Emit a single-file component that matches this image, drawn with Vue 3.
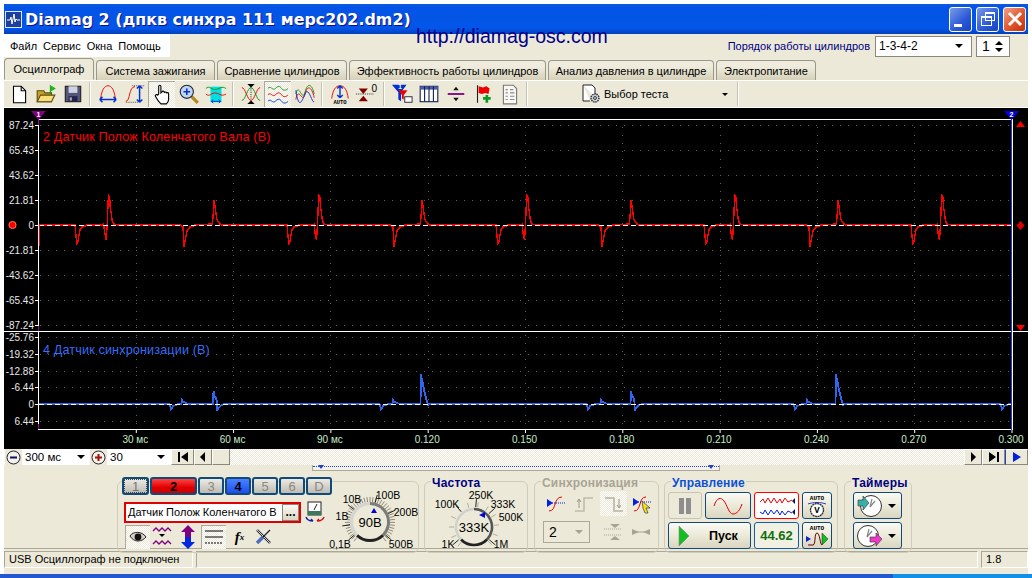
<script setup>
// Diamag 2 oscilloscope window

const tabs = [
  { name: 'Осциллограф', w: 90 },
  { name: 'Система зажигания', w: 119 },
  { name: 'Сравнение цилиндров', w: 130 },
  { name: 'Эффективность работы цилиндров', w: 197 },
  { name: 'Анализ давления в цилиндре', w: 166 },
  { name: 'Электропитание', w: 100 }
];

const channels = [
  { t: '1', w: 27, c: 'gray focus' },
  { t: '2', w: 47, c: 'red' },
  { t: '3', w: 26, c: 'gray dim' },
  { t: '4', w: 26, c: 'blue' },
  { t: '5', w: 26, c: 'gray dim' },
  { t: '6', w: 26, c: 'gray dim' },
  { t: 'D', w: 26, c: 'gray dim' }
];

// --- plot data ---
const gridX = Array.from({ length: 9 }, (_, i) => 39 + 97.3 * (i + 1));
const timeLabels = ['30 мс', '60 мс', '90 мс', '0.120', '0.150', '0.180', '0.210', '0.240', '0.270', '0.300'];
const upperAxis = [
  ['87.24', 125], ['65.43', 150], ['43.62', 175], ['21.81', 200], ['0', 225],
  ['-21.81', 250], ['-43.62', 275], ['-65.43', 300], ['-87.24', 325]
];
const lowerAxis = [
  ['-25.76', 337], ['-19.32', 354], ['-12.88', 371], ['-6.44', 387], ['0', 404], ['6.44', 421]
];

const place = (x0, pts) => pts.map(([dx, y]) => [x0 + dx, y]);
const toPath = (base, pulses) => {
  const all = pulses.slice().sort((a, b) => a[0][0] - b[0][0]).flat();
  return 'M39 ' + base + ' ' + all.map(p => 'L' + p[0] + ' ' + p[1]).join(' ') + ' L1012 ' + base;
};

const negA = [[-2, 225], [-1, 236], [0, 243], [1, 241], [2, 235], [3, 230], [5, 227], [8, 226], [10, 225]];
const negB = [[-4, 225], [-1, 227], [0, 247], [1.5, 238], [3, 231], [6, 227], [9, 226], [11, 225]];
const tall = [[-6, 225], [-5, 224], [-4, 233], [-2.5, 240], [-1.5, 224], [-0.5, 200], [0, 196], [1, 198], [1.5, 207], [2.5, 213], [3.5, 221], [5, 224], [9, 225]];
const small = [[-2, 224], [-1, 218], [0, 200], [1.5, 210], [3, 220], [6, 224], [8, 225]];

const redPulses = [];
[77, 184, 289, 394, 498, 602, 706, 810, 913].forEach((x, i) => redPulses.push(place(x, i % 2 ? negB : negA)));
[108.7, 214, 319, 422, 527, 631, 735, 838, 942].forEach((x, i) => redPulses.push(place(x, i % 2 ? small : tall)));
const redPath = toPath(225, redPulses);

const bNeg = [[-1.5, 404], [0, 409], [1, 408], [2, 406], [5, 405], [7, 404]];
const bBump = [[-0.5, 404], [0, 400], [1.5, 402], [4, 403], [7, 404]];
const bSmall = [[-0.5, 404], [0, 391], [1, 396], [2.5, 398], [3.5, 402], [3.5, 411], [5, 408], [8, 405], [11, 404]];
const bTall = [[-0.5, 404], [0, 374], [1, 380], [2, 384], [3, 390], [4, 394], [5, 398], [6, 402], [7, 405], [7.5, 404]];

const bluePulses = [];
[171, 381, 588, 795, 1002].forEach(x => bluePulses.push(place(x, bNeg)));
[182, 393, 601, 807].forEach(x => bluePulses.push(place(x, bBump)));
[213.5, 421, 631, 836].forEach((x, i) => bluePulses.push(place(x, i % 2 ? bTall : bSmall)));
const bluePath = toPath(404, bluePulses);

// --- knobs ---
const rad = d => (d * Math.PI) / 180;
const ticks = (cx, cy, r1, r2, from, to, step) => {
  const out = [];
  for (let a = from; a <= to; a += step) {
    out.push({
      x1: cx + r1 * Math.cos(rad(a)), y1: cy + r1 * Math.sin(rad(a)),
      x2: cx + r2 * Math.cos(rad(a)), y2: cy + r2 * Math.sin(rad(a))
    });
  }
  return out;
};
const at = (cx, cy, r1, r2, list) => list.flatMap(a => ticks(cx, cy, r1, r2, a, a, 1));

const volt = { hatch: ticks(370, 522, 20, 25, 130, 410, 7), black: at(370, 522, 20, 28, [140, 172, 218, 285, 335, 40]) };
const freq = { hatch: ticks(474, 527, 20, 25, 130, 410, 25), black: at(474, 527, 20, 28, [140, 230, 275, 318, 40]) };
</script>

<template>
  <div class="win">
    <header class="titlebar">
      <svg class="app-ico" viewBox="0 0 17 17" width="17" height="17">
        <rect x="0.5" y="0.5" width="16" height="16" fill="#1c3f9e" stroke="#dfe8ff" />
        <path d="M2 9h3l1-3 1 7 2-10 1 8 1-3 1 1h3" fill="none" stroke="#fff" />
      </svg>
      <span class="app-title">Diamag 2 (дпкв синхра 111 мерс202.dm2)</span>
      <div class="caps">
        <button class="cap"><i class="c-min"></i></button>
        <button class="cap"><i class="c-res"></i><i class="c-res back"></i></button>
        <button class="cap close">
          <svg viewBox="0 0 16 16" width="16" height="16"><path d="M2 2l12 12M14 2L2 14" stroke="#fff" stroke-width="3" /></svg>
        </button>
      </div>
    </header>
    <a class="site">http://diamag-osc.com</a>

    <div class="menurow">
      <nav class="menu">
        <span>Файл</span><span>Сервис</span><span>Окна</span><span>Помощь</span>
      </nav>
      <div class="order">
        <span class="order-label">Порядок работы цилиндров</span>
        <div class="combo order-combo"><span>1-3-4-2</span><i class="arr"></i></div>
        <div class="spin"><span>1</span>
          <div class="spin-arrows"><i class="arr up"></i><i class="arr"></i></div>
        </div>
      </div>
    </div>

    <div class="tabs">
      <div v-for="(t, i) in tabs" :key="t.name" class="tab" :class="{ active: i === 0 }" :style="{ width: t.w + 'px' }">{{ t.name }}</div>
    </div>

    <div class="toolbar">
      <button class="tb">
        <svg viewBox="0 0 20 20"><path d="M5 3h7l4 4v11H5z" fill="#fff" stroke="#000" /><path d="M12 3v4h4" fill="none" stroke="#000" /></svg>
      </button>
      <button class="tb">
        <svg viewBox="0 0 20 20"><path d="M2 7h6l1 2h6v8H2z" fill="#c9a227" stroke="#5a4a10" /><path d="M2 17l3-6h13l-3 6z" fill="#f6de7a" stroke="#5a4a10" /><path d="M14 2v8" stroke="#0a0" /><path d="M14 2l5 3-5 3z" fill="#1fb51f" /></svg>
      </button>
      <button class="tb">
        <svg viewBox="0 0 20 20"><rect x="3" y="3" width="14" height="14" fill="#55557a" stroke="#222" /><rect x="6" y="3" width="8" height="6" fill="#cfd2e0" /><rect x="6" y="12" width="8" height="5" fill="#22224a" /><rect x="7" y="13" width="2" height="3" fill="#aaa" /></svg>
      </button>
      <i class="tsep first"></i>
      <button class="tb">
        <svg viewBox="0 0 24 24"><path d="M4 17C5 8 8 3 12 3s7 5 8 14" fill="none" stroke="#e00" /><path d="M3 18h18M3 18l3-3M3 18l3 3M21 18l-3-3M21 18l-3 3" fill="none" stroke="#0030d0" stroke-width="1.6" /></svg>
      </button>
      <button class="tb">
        <svg viewBox="0 0 24 24"><path d="M2 20c5 0 3-16 10-16" fill="none" stroke="#e00" /><path d="M9 3h13M2 21h13" stroke="#444" stroke-dasharray="1 1" /><path d="M17 3v18M17 3l-3 3M17 3l3 3M17 21l-3-3M17 21l3-3" fill="none" stroke="#0030d0" stroke-width="1.6" /></svg>
      </button>
      <button class="tb on">
        <svg viewBox="0 0 20 20"><path d="M7 10V3a1 1 0 0 1 2 0v6l1-1a1 1 0 0 1 2 1 1 1 0 0 1 2 0.5 1 1 0 0 1 2 .5v5c0 2-1 3-2 4H9c-2-2-4-5-5-7-.5-1 1-2 2-1z" fill="#fff" stroke="#000" /></svg>
      </button>
      <button class="tb">
        <svg viewBox="0 0 20 20"><path d="M12 12l6 6" stroke="#b08a20" stroke-width="3" /><circle cx="8" cy="8" r="6" fill="#bcd6f5" stroke="#223" /><path d="M5 8h6M8 5v6" stroke="#1030c0" stroke-width="1.4" /></svg>
      </button>
      <button class="tb">
        <svg viewBox="0 0 24 24"><rect x="6" y="4" width="12" height="17" fill="#00e0e0" /><path d="M1 6c4-4 6 2 11 1s6-4 11-1" fill="none" stroke="#109010" /><path d="M1 12c4 4 6-2 11-1s6 4 11 1" fill="none" stroke="#e00" /><path d="M7 20h10M7 20l2-2M7 20l2 2M17 20l-2-2M17 20l-2 2" fill="none" stroke="#0030d0" /></svg>
      </button>
      <i class="tsep"></i>
      <button class="tb">
        <svg viewBox="0 0 24 24"><path d="M2 5c4 0 6 14 10 14s6-14 10-14" fill="none" stroke="#e00" /><path d="M2 19c4 0 6-14 10-14s6 14 10 14" fill="none" stroke="#109010" /><path d="M8 1h8l-4 4zM8 23h8l-4-4z" /><path d="M12 6v12" stroke="#222" stroke-dasharray="1 1" /></svg>
      </button>
      <button class="tb on">
        <svg viewBox="0 0 24 24"><path d="M1 6c3-4 5 3 8 0s5-3 7 0 5 2 7 0" fill="none" stroke="#109010" /><path d="M1 13c3-4 5 3 8 0s5-3 7 0 5 2 7 0" fill="none" stroke="#e00" /><path d="M1 20c3-4 5 3 8 0s5-3 7 0 5 2 7 0" fill="none" stroke="#0030d0" /></svg>
      </button>
      <button class="tb">
        <svg viewBox="0 0 24 24"><path d="M2 12C5-2 9 22 12 10s8-8 10 2" fill="none" stroke="#109010" /><path d="M2 18C5 2 9 24 12 12s8-6 10 4" fill="none" stroke="#e00" /><path d="M2 8c3 20 6 14 10 4s8 12 10 8" fill="none" stroke="#0030d0" /></svg>
      </button>
      <i class="tsep"></i>
      <button class="tb">
        <svg viewBox="0 0 24 24"><path d="M3 17C4 8 7 3 12 3s8 5 9 14" fill="none" stroke="#e00" /><path d="M12 3v13M12 3L9 6M12 3l3 3M12 16l-3-3M12 16l3-3" fill="none" stroke="#0030d0" stroke-width="1.5" /><text x="12" y="23" class="auto">AUTO</text></svg>
      </button>
      <button class="tb">
        <svg viewBox="0 0 24 24"><path d="M3 6h10l-5 6zM3 20h10l-5-6z" fill="#800000" /><path d="M0 12h20" stroke="#222" stroke-dasharray="1 1" /><text x="17" y="10" class="zero">0</text></svg>
      </button>
      <i class="tsep"></i>
      <button class="tb">
        <svg viewBox="0 0 24 24"><path d="M1 2h16l-6 8v10l-3-2v-8z" fill="#0030d0" /><path d="M8 8h10l-4 5v5l-2-1v-4z" fill="#e00" /><text x="8" y="6" class="digit">1</text><rect x="15" y="15" width="8" height="6" fill="#fff" stroke="#223" /></svg>
      </button>
      <button class="tb">
        <svg viewBox="0 0 20 20"><rect x="2" y="3" width="16" height="14" fill="#fff" stroke="#102050" /><rect x="2" y="3" width="16" height="3" fill="#4a5aa8" /><path d="M6 3v14M10 3v14M14 3v14" stroke="#102050" /></svg>
      </button>
      <button class="tb">
        <svg viewBox="0 0 24 24"><path d="M3 12h18" stroke="#800080" stroke-width="2" /><path d="M9 8h6l-3-4zM9 16h6l-3 4z" fill="#111" /></svg>
      </button>
      <button class="tb">
        <svg viewBox="0 0 20 20"><path d="M5 2v16" stroke="#222" /><path d="M6 3l4 1 3-1 3 2-1 5-3-1-3 1-3-1z" fill="#e00" /><path d="M10 14h7M13.5 11v7" stroke="#0a9a20" stroke-width="2.4" /></svg>
      </button>
      <button class="tb">
        <svg viewBox="0 0 20 20"><path d="M4 2h9l3 3v14H4z" fill="#f8f8f0" stroke="#777" /><path d="M6 6h2M6 9h2M6 12h2M6 15h2M10 6h3M10 9h4M10 12h4M10 15h4" stroke="#889" /></svg>
      </button>
      <i class="tsep"></i>
      <div class="test-pick">
        <svg class="gear" viewBox="0 0 20 20" width="20" height="20"><path d="M2 1h9l3 3v9M2 1v16h7" fill="#fff" stroke="#222" /><circle cx="14" cy="14" r="4" fill="#cfd8c8" stroke="#224" stroke-width="1.4" stroke-dasharray="1.4 .8" /><circle cx="14" cy="14" r="1.4" fill="#fff" stroke="#224" /></svg>
        <span>Выбор теста</span>
        <i class="arr small"></i>
      </div>
      <i class="tsep"></i>
    </div>

    <div class="plot">
      <svg viewBox="4 108 1024 341" width="1024" height="341" class="scope">
        <!-- grid -->
        <g stroke="#5f5f5f" stroke-dasharray="1 7" shape-rendering="crispEdges">
          <line v-for="x in gridX" :key="'v' + x" :x1="x" y1="119" :x2="x" y2="429" />
          <line v-for="a in upperAxis" :key="'h' + a[0]" x1="40" :y1="a[1]" x2="1011" :y2="a[1]" />
          <line v-for="a in lowerAxis" :key="'l' + a[0]" x1="40" :y1="a[1]" x2="1011" :y2="a[1]" />
        </g>
        <!-- traces -->
        <path :d="redPath" fill="none" stroke="#ff0000" stroke-width="1.4" shape-rendering="crispEdges" />
        <path :d="bluePath" fill="none" stroke="#2f66ee" stroke-width="1.8" shape-rendering="crispEdges" />
        <line x1="39" y1="225.5" x2="1012" y2="225.5" stroke="#fff" stroke-dasharray="5 3" shape-rendering="crispEdges" />
        <line x1="39" y1="404.5" x2="1012" y2="404.5" stroke="#fff" stroke-dasharray="5 3" shape-rendering="crispEdges" />
        <line x1="39.5" y1="225" x2="39.5" y2="246" stroke="#f00" />
        <!-- frame -->
        <g stroke="#fff" shape-rendering="crispEdges">
          <line x1="39" y1="119.5" x2="1012" y2="119.5" />
          <line x1="4" y1="331.5" x2="1028" y2="331.5" />
          <line x1="39" y1="429.5" x2="1012" y2="429.5" />
          <line x1="38.5" y1="119" x2="38.5" y2="430" />
          <line x1="1012.5" y1="119" x2="1012.5" y2="430" />
        </g>
        <g stroke="#a000a0" shape-rendering="crispEdges">
          <line x1="38.5" y1="119" x2="38.5" y2="125" />
          <line x1="38.5" y1="326" x2="38.5" y2="331" />
          <line x1="38.5" y1="424" x2="38.5" y2="429" />
        </g>
        <line x1="1011.5" y1="112" x2="1011.5" y2="430" stroke="#2040d0" shape-rendering="crispEdges" />
        <!-- axis labels -->
        <g v-for="a in upperAxis" :key="'u' + a[0]">
          <line x1="35" :y1="a[1] + 0.5" x2="38" :y2="a[1] + 0.5" stroke="#fff" shape-rendering="crispEdges" />
          <text x="34" :y="a[1] + 4" text-anchor="end" class="ax">{{ a[0] }}</text>
        </g>
        <g v-for="a in lowerAxis" :key="'w' + a[0]">
          <line x1="35" :y1="a[1] + 0.5" x2="38" :y2="a[1] + 0.5" stroke="#fff" shape-rendering="crispEdges" />
          <text x="34" :y="a[1] + 4" text-anchor="end" class="ax">{{ a[0] }}</text>
        </g>
        <g v-for="(t, i) in timeLabels" :key="t">
          <line :x1="39 + 97.3 * (i + 1)" y1="430" :x2="39 + 97.3 * (i + 1)" y2="433" stroke="#fff" />
          <text :x="39 + 97.3 * (i + 1) - 1" y="443" text-anchor="middle" class="tx">{{ t }}</text>
        </g>
        <text x="43" y="141" class="name red">2 Датчик Полож Коленчатого Вала (В)</text>
        <text x="43" y="354" class="name blue">4 Датчик синхронизации (В)</text>
        <!-- markers -->
        <path d="M31 111h15l-7.5 9z" fill="#800080" />
        <text x="38.5" y="117" class="mk">1</text>
        <path d="M1004 111h15l-7.5 9z" fill="#0000e0" />
        <text x="1011.5" y="117" class="mk">2</text>
        <path d="M1016 127h9l-4.5-6z" fill="#f00" />
        <path d="M1016 325h9l-4.5 6z" fill="#f00" />
        <path d="M1020.5 221l4 4.5-4 4.5-4-4.5z" fill="#e00000" />
        <circle cx="12.5" cy="225" r="3.6" fill="#f00" stroke="#ff7a40" />
      </svg>
    </div>

    <div class="timebar">
      <button class="round">
        <svg viewBox="0 0 15 15" width="15" height="15"><circle cx="7.5" cy="7.5" r="6.5" fill="#f4f2e6" stroke="#223" /><path d="M4 7.5h7" stroke="#101060" stroke-width="2" /></svg>
      </button>
      <div class="combo t1"><span>300 мс</span><i class="arr"></i></div>
      <button class="round">
        <svg viewBox="0 0 15 15" width="15" height="15"><circle cx="7.5" cy="7.5" r="6.5" fill="#f4f2e6" stroke="#223" /><path d="M4 7.5h7M7.5 4v7" stroke="#a01010" stroke-width="2" /></svg>
      </button>
      <div class="combo t2"><span>30</span><i class="arr"></i></div>
      <button class="nav w24">
        <svg viewBox="0 0 12 10" width="12" height="10"><path d="M1 0h2v10H1zM11 0v10L4 5z" /></svg>
      </button>
      <button class="nav w18">
        <svg viewBox="0 0 6 10" width="6" height="10"><path d="M5 0v10L0 5z" /></svg>
      </button>
      <button class="nav w18 blank"></button>
      <div class="track"></div>
      <button class="nav w18">
        <svg viewBox="0 0 6 10" width="6" height="10"><path d="M1 0v10l5-5z" /></svg>
      </button>
      <button class="nav w24">
        <svg viewBox="0 0 12 10" width="12" height="10"><path d="M1 0v10l7-5zM9 0h2v10H9z" /></svg>
      </button>
      <button class="nav w24 last">
        <svg viewBox="0 0 10 10" width="10" height="10"><path d="M1 0v10l8-5z" fill="#0020e0" /></svg>
      </button>
    </div>

    <div class="slider"><i class="sl-l"></i><i class="sl-r"></i></div>

    <div class="panels">
      <section class="group g1">
        <div class="g1-left">
          <div class="chans">
            <button v-for="c in channels" :key="c.t" class="chan" :class="c.c" :style="{ width: c.w + 'px' }">{{ c.t }}</button>
          </div>
          <div class="sensor-row">
            <div class="sensor">
              <span>Датчик Полож Коленчатого В</span>
              <button class="dots">...</button>
            </div>
            <svg class="meter" viewBox="0 0 20 22" width="20" height="22">
              <rect x="3" y="1" width="13" height="13" fill="#fff" stroke="#222" /><rect x="3" y="10" width="13" height="4" fill="#3a7a5a" /><path d="M9 9l3-6" stroke="#222" />
              <path d="M1 16c1 3 4 4 7 4M8 20l-2-2" fill="none" stroke="#1020a0" stroke-width="1.4" /><path d="M19 16c-1 3-4 4-7 4M12 20l2-2" fill="none" stroke="#d01010" stroke-width="1.4" />
            </svg>
          </div>
          <div class="ch-tools">
            <button class="ct on w25">
              <svg viewBox="0 0 18 12" width="18" height="12"><path d="M1 5c3-5 12-5 16 1-4 5-12 6-16-1z" fill="#d8d0c8" stroke="#222" /><circle cx="9" cy="6" r="3.4" fill="#111" /></svg>
            </button>
            <button class="ct w24b">
              <svg viewBox="0 0 20 24" width="20" height="24"><path d="M1 6l3-3 3 3 3-3 3 3 3-3 3 3M1 19l3-3 3 3 3-3 3 3 3-3 3 3" fill="none" stroke="#800080" stroke-width="1.3" /><path d="M7 9h6l-3 3z" /></svg>
            </button>
            <button class="ct w27">
              <svg viewBox="0 0 16 24" width="16" height="24"><path d="M8 0l7 7h-4v5H5V7H1z" fill="#800080" /><path d="M8 24l7-7h-4v-5H5v5H1z" fill="#0028e0" /></svg>
            </button>
            <button class="ct on w25">
              <svg viewBox="0 0 20 16" width="20" height="16"><path d="M1 2h18M1 8h18" stroke="#000" /><path d="M1 14h18" stroke="#000" stroke-dasharray="2 1" /></svg>
            </button>
            <button class="ct fx w27">f<sub>x</sub></button>
            <button class="ct w20">
              <svg viewBox="0 0 18 18" width="18" height="18"><path d="M3 2l13 13" stroke="#223" stroke-width="2.4" /><path d="M3 2l13 13" stroke="#fff" stroke-width=".8" /><path d="M16 2l-7 7" stroke="#223" stroke-width="1.2" /><path d="M9 9l-6 6" stroke="#4a70b8" stroke-width="3.4" /></svg>
            </button>
          </div>
        </div>
        <svg class="knob" viewBox="330 486 88 66" width="88" height="66">
          <g stroke="#8e8a78">
            <line v-for="(t, i) in volt.hatch" :key="i" :x1="t.x1" :y1="t.y1" :x2="t.x2" :y2="t.y2" />
          </g>
          <g stroke="#222">
            <line v-for="(t, i) in volt.black" :key="i" :x1="t.x1" :y1="t.y1" :x2="t.x2" :y2="t.y2" />
          </g>
          <path d="M370 503.5a18.5 18.5 0 0 1 13 31.7" fill="none" stroke="#7c7c78" stroke-width="3" />
          <path d="M383 535.2a18.5 18.5 0 0 1-26 0" fill="none" stroke="#222" stroke-width="3" />
          <path d="M357 535.2a18.5 18.5 0 0 1 13-31.7" fill="none" stroke="#d4d4d0" stroke-width="3" />
          <path d="M374 508l-3 5h6z" fill="#0000e0" />
          <text x="370" y="527" text-anchor="middle" class="k-val">90В</text>
          <text x="352" y="503" text-anchor="middle" class="k">10В</text>
          <text x="388" y="499" text-anchor="middle" class="k">100В</text>
          <text x="342" y="520" text-anchor="middle" class="k">1В</text>
          <text x="406" y="516" text-anchor="middle" class="k">200В</text>
          <text x="340" y="548" text-anchor="middle" class="k">0,1В</text>
          <text x="401" y="548" text-anchor="middle" class="k">500В</text>
        </svg>
      </section>

      <section class="group g2">
        <h4 class="gt navy">Частота</h4>
        <svg viewBox="424 481 104 72" width="104" height="72">
          <g stroke="#b0ac98">
            <line v-for="(t, i) in freq.hatch" :key="i" :x1="t.x1" :y1="t.y1" :x2="t.x2" :y2="t.y2" />
          </g>
          <g stroke="#222">
            <line v-for="(t, i) in freq.black" :key="i" :x1="t.x1" :y1="t.y1" :x2="t.x2" :y2="t.y2" />
          </g>
          <path d="M474 509a18 18 0 0 1 13 30.5" fill="none" stroke="#555" stroke-width="2.6" />
          <path d="M487 539.5a18 18 0 0 1-26 0" fill="none" stroke="#222" stroke-width="2.6" />
          <path d="M461 539.5a18 18 0 0 1 13-30.5" fill="none" stroke="#d0d0cc" stroke-width="2.6" />
          <path d="M479 515l6-3v6z" fill="#0000e0" />
          <text x="474" y="532" text-anchor="middle" class="k-val">333K</text>
          <text x="481" y="499" text-anchor="middle" class="k">250K</text>
          <text x="447" y="508" text-anchor="middle" class="k">100K</text>
          <text x="503" y="508" text-anchor="middle" class="k">333K</text>
          <text x="511" y="521" text-anchor="middle" class="k">500K</text>
          <text x="448" y="548" text-anchor="middle" class="k">1K</text>
          <text x="501" y="548" text-anchor="middle" class="k">1M</text>
        </svg>
      </section>

      <section class="group g3">
        <h4 class="gt gray">Синхронизация</h4>
        <div class="sync-row">
          <button class="sy">
            <svg viewBox="0 0 20 20" width="20" height="20"><path d="M3 17c8 0 4-14 13-14" fill="none" stroke="#e00" /><path d="M6 9h13" stroke="#0020e0" stroke-dasharray="1 1" /><path d="M1 5l6 4-6 4z" fill="#0020e0" /></svg>
          </button>
          <button class="sy">
            <svg viewBox="0 0 20 20" width="20" height="20"><path d="M1 17h9V4h9" fill="none" stroke="#c0bcaa" stroke-width="1.6" /><path d="M5 5v9M3 8l2-3 2 3" fill="none" stroke="#9a9888" /></svg>
          </button>
          <button class="sy on">
            <svg viewBox="0 0 20 20" width="20" height="20"><path d="M1 4h9v13h9" fill="none" stroke="#b8b4a2" stroke-width="1.6" /><path d="M15 5v9M13 11l2 3 2-3" fill="none" stroke="#9a9888" /></svg>
          </button>
          <button class="sy">
            <svg viewBox="0 0 20 20" width="20" height="20"><path d="M2 17c8 0 4-14 12-14" fill="none" stroke="#e00" /><path d="M6 8h13" stroke="#0020e0" stroke-dasharray="1 1" /><path d="M1 4l6 4-6 4z" fill="#0020e0" /><path d="M10 7l8 7-4 0 2 5-3 0-2-5z" fill="#f5e020" stroke="#222" stroke-width=".6" /></svg>
          </button>
        </div>
        <div class="sync-row low">
          <div class="combo dis"><span>2</span><i class="arr gray-a"></i></div>
          <button class="sy">
            <svg viewBox="0 0 20 20" width="20" height="20"><path d="M1 7h18M1 13h18" stroke="#a8a494" stroke-dasharray="1 1" /><path d="M7 2h10l-5 4zM7 18h10l-5-4z" fill="#a8a494" /></svg>
          </button>
          <button class="sy">
            <svg viewBox="0 0 20 20" width="20" height="20"><path d="M1 7v6l7-3zM19 7v6l-7-3z" fill="#a8a494" /><path d="M6 10h8" stroke="#a8a494" /></svg>
          </button>
        </div>
      </section>

      <section class="group g4">
        <h4 class="gt bluey">Управление</h4>
        <div class="ctl">
          <button class="cb off">
            <svg viewBox="0 0 14 16" width="14" height="16"><rect x="1" y="0" width="5" height="16" fill="#8e8e8e" /><rect x="8" y="0" width="5" height="16" fill="#8e8e8e" /></svg>
          </button>
          <button class="cb">
            <svg viewBox="0 0 30 20" width="30" height="20"><path d="M1 10C4 1 8 1 11 5c3 4 5 13 9 13 4 0 7-4 9-10" fill="none" stroke="#e00" /></svg>
          </button>
          <button class="cb redframe">
            <svg viewBox="0 0 36 22" width="36" height="22"><path d="M1 7l3-3 2 4 3-5 3 5 3-5 3 5 3-4 2 4 3-5 3 4 4-2" fill="none" stroke="#e00" /><path d="M1 17l3 2 2-4 3 5 3-5 3 4 3-4 3 5 2-4 3 4 3-4 4 2" fill="none" stroke="#0020e0" /><path d="M36 3v6l-3-3zM36 14v6l-3-3z" fill="#101060" /></svg>
          </button>
          <button class="cb">
            <svg viewBox="0 0 22 24" width="22" height="24"><text x="11" y="6" class="auto">AUTO</text><path d="M2 10c5-2 13-2 18 0" fill="none" stroke="#2040c0" /><circle cx="11" cy="16" r="6.5" fill="#fff" stroke="#333" stroke-dasharray="2 .5" stroke-width="1.4" /><text x="11" y="19" class="auto v">V</text></svg>
          </button>
          <button class="cb start">
            <svg viewBox="0 0 12 20" width="12" height="20"><path d="M1 0v20l10-10z" fill="#10c020" stroke="#888" stroke-width=".6" /></svg>
            <span>Пуск</span>
          </button>
          <button class="cb num">44.62</button>
          <button class="cb">
            <svg viewBox="0 0 22 24" width="22" height="24"><text x="11" y="6" class="auto">AUTO</text><path d="M2 21h5c3 0 1-12 4-12s3 12 5 12" fill="none" stroke="#600" /><path d="M0 12l5 3-5 3z" fill="#1020d0" /><path d="M16 9l6 6-6 6z" fill="#10c020" stroke="#222" stroke-width=".5" /></svg>
          </button>
        </div>
      </section>

      <section class="group g5">
        <h4 class="gt navy">Таймеры</h4>
        <button class="cb timer">
          <svg viewBox="0 0 26 22" width="26" height="22"><circle cx="14" cy="11" r="10.5" fill="#fff" stroke="#333" /><path d="M15 4l-2 8 5-6" fill="none" stroke="#888" stroke-width="1.2" /><path d="M1 5h5V1l6 7-6 7v-4H1z" fill="#38b0a8" stroke="#333" stroke-width=".6" /></svg>
          <i class="arr"></i>
        </button>
        <button class="cb timer">
          <svg viewBox="0 0 26 22" width="26" height="22"><circle cx="11" cy="11" r="10.5" fill="#fff" stroke="#333" /><path d="M12 4l-2 8 5-6" fill="none" stroke="#888" stroke-width="1.2" /><path d="M13 12h6V8l6 6-6 7v-4h-6z" fill="#f038c8" stroke="#333" stroke-width=".6" /></svg>
          <i class="arr"></i>
        </button>
      </section>
    </div>

    <footer class="status">
      <div class="cell c1">USB Осциллограф не подключен</div>
      <div class="cell c2"></div>
      <div class="cell c3">1.8</div>
    </footer>
  </div>
  <div class="taskbar"><i></i></div>
</template>

<style>
html, body { margin: 0; background: #fff; overflow: hidden; }
</style>

<style scoped>
.win {
  position: relative;
  width: 1024px;
  height: 570px;
  margin: 4px 4px 0;
  background: #ece9d8;
  font-family: "Liberation Sans", Arial, sans-serif;
  font-size: 11px;
  color: #000;
  overflow: hidden;
}
button { font-family: inherit; padding: 0; margin: 0; }

/* title bar */
.titlebar {
  display: flex;
  align-items: center;
  height: 30px;
  padding-left: 1px;
  box-sizing: border-box;
  background: linear-gradient(#0a5be0 0%, #0453e8 12%, #0355e4 50%, #0456ec 80%, #0340b8 100%);
}
.app-ico { flex: none; }
.app-title {
  margin-left: 3px;
  font: bold 15.9px "DejaVu Sans", Verdana, sans-serif;
  color: #fff;
  text-shadow: 1px 1px #0f1089;
  white-space: nowrap;
}
.caps { display: flex; gap: 4px; margin-left: auto; margin-right: 2px; }
.cap {
  position: relative;
  width: 23px;
  height: 25px;
  display: flex;
  align-items: center;
  justify-content: center;
  border: 1px solid #fff;
  border-radius: 3px;
  background: linear-gradient(135deg, #7a9ce8, #2a58d8 60%, #1a44c0);
}
.cap.close { background: linear-gradient(135deg, #f0a088, #e0562c 55%, #c03010); }
.c-min { position: absolute; left: 4px; bottom: 4px; width: 8px; height: 3px; background: #fff; }
.c-res { position: absolute; left: 4px; bottom: 5px; width: 9px; height: 7px; border: 1px solid #fff; border-top-width: 2px; }
.c-res.back { left: 8px; bottom: 10px; width: 8px; height: 6px; }

.site {
  position: absolute;
  left: 412px;
  top: 21px;
  font-size: 19.5px;
  color: #00008b;
  white-space: nowrap;
}

/* menu row */
.menurow { display: flex; justify-content: space-between; height: 24px; }
.menu {
  display: flex;
  align-items: center;
  gap: 6px;
  width: 160px;
  height: 23px;
  padding-left: 6px;
  background: #fff;
  font-size: 11px;
}
.order { display: flex; align-items: center; padding-right: 18px; }
.order-label { color: #000080; margin-right: 5px; font-size: 11px; }
.combo {
  position: relative;
  display: flex;
  align-items: center;
  justify-content: space-between;
  box-sizing: border-box;
  background: #fff;
}
.order-combo { width: 97px; height: 21px; border: 1px solid #8a887c; padding: 0 8px 0 3px; font-size: 12px; }
.spin {
  display: flex;
  align-items: center;
  justify-content: space-between;
  box-sizing: border-box;
  width: 34px;
  height: 21px;
  margin-left: 4px;
  padding: 0 6px 0 5px;
  border: 1px solid #8a887c;
  background: #fff;
  font-size: 14px;
}
.spin-arrows { display: flex; flex-direction: column; gap: 3px; }
.arr {
  display: block;
  width: 0;
  height: 0;
  border-left: 4px solid transparent;
  border-right: 4px solid transparent;
  border-top: 4px solid #000;
}
.arr.up { border-top: 0; border-bottom: 4px solid #000; }
.arr.small { border-left-width: 3px; border-right-width: 3px; border-top-width: 3px; }
.arr.gray-a { border-top-color: #a8a494; }

/* tabs */
.tabs {
  display: flex;
  height: 23px;
  gap: 2px;
  padding-top: 2px;
  box-sizing: border-box;
  border-bottom: 1px solid #fff;
}
.tab {
  flex: none;
  box-sizing: border-box;
  display: flex;
  align-items: center;
  justify-content: center;
  height: 20px;
  border: 1px solid #9a988a;
  border-bottom: 0;
  border-radius: 4px 4px 0 0;
  background: linear-gradient(#efecdd 30%, #d6d0b8);
  font-size: 11px;
  white-space: nowrap;
}
.tab.active { height: 22px; margin-top: -2px; background: #ece9d8; border-bottom: 1px solid #ece9d8; }

/* toolbar */
.toolbar {
  display: flex;
  align-items: center;
  height: 27px;
  padding-left: 1px;
  box-sizing: border-box;
  border-bottom: 1px solid #fff;
}
.tb {
  flex: none;
  display: flex;
  align-items: center;
  justify-content: center;
  width: 27px;
  height: 26px;
  border: 0;
  background: none;
}
.tb svg { width: 22px; height: 22px; }
.tb.on {
  background: repeating-conic-gradient(#fff 0 25%, #ece9d8 0 50%) 0 0 / 2px 2px;
  box-shadow: inset 1px 1px #aca899;
}
.tsep { flex: none; width: 2px; height: 24px; margin: 0 3px 0 3px; background: linear-gradient(90deg, #c4c1ae 50%, #fff 50%); }
.tsep.first { margin-left: 3px; }
.auto { font: bold 6px "Liberation Mono", monospace; text-anchor: middle; fill: #000; }
.auto.v { font-size: 9px; }
.zero { font: 11px "Liberation Sans", sans-serif; fill: #000; }
.digit { font: bold 7px "Liberation Sans", sans-serif; fill: #fff; }
.test-pick {
  display: flex;
  align-items: center;
  width: 203px;
  height: 26px;
  padding-left: 50px;
  box-sizing: border-box;
  font-size: 11px;
}
.gear { margin-right: 3px; }
.test-pick .arr { margin-left: 54px; }

/* scope */
.plot { height: 341px; background: #000; }
.scope { display: block; }
.ax { font: 10px "Liberation Sans", sans-serif; fill: #e8e8e8; }
.tx { font: 10px "Liberation Sans", sans-serif; fill: #c8ecc8; }
.name { font: 12.6px "Liberation Sans", sans-serif; letter-spacing: 0.15px; }
.name.red { fill: #f00; }
.name.blue { fill: #3a6cf5; }
.mk { font: bold 7px "Liberation Sans", sans-serif; fill: #fff; text-anchor: middle; }

/* time bar */
.timebar { display: flex; align-items: stretch; height: 16px; background: #fff; font-size: 11.5px; }
.round {
  flex: none;
  display: flex;
  align-items: center;
  justify-content: center;
  width: 17px;
  border: 0;
  background: #ece9d8;
}
.round:first-child { margin-left: 1px; }
.t1 { width: 68px; padding: 0 5px 0 3px; }
.t2 { width: 64px; padding: 0 6px 0 3px; }
.nav {
  flex: none;
  display: flex;
  align-items: center;
  justify-content: center;
  box-sizing: border-box;
  height: 16px;
  border: 1px solid;
  border-color: #fff #8a887c #8a887c #fff;
  background: #ece9d8;
}
.w24 { width: 23px; }
.w18 { width: 18px; }
.nav.last { border-left: 1px solid #2040d0; }
.nav svg { display: block; }
.track {
  flex: 1;
  background: repeating-conic-gradient(#fff 0 25%, #ece9d8 0 50%) 0 0 / 2px 2px;
}

.slider {
  position: relative;
  width: 408px;
  height: 6px;
  margin-left: 308px;
  box-sizing: border-box;
  border: 1px solid #aca899;
  border-top: 0;
  background: #f4f2e6;
}
.slider::before { content: ""; position: absolute; left: 0; right: 0; top: 1px; border-top: 1px dotted #2040d0; }
.sl-l, .sl-r {
  position: absolute;
  top: 0;
  width: 0;
  height: 0;
  border-left: 3px solid transparent;
  border-right: 3px solid transparent;
  border-top: 4px solid #2040d0;
}
.sl-l { left: 5px; }
.sl-r { right: 5px; }

/* panels */
.panels { display: flex; height: 77px; padding-left: 113px; padding-top: 6px; box-sizing: border-box; gap: 5px; }
.group {
  position: relative;
  flex: none;
  box-sizing: border-box;
  height: 72px;
  margin-top: 4px;
  border: 1px solid #cfccb9;
  border-radius: 6px;
}
.gt {
  position: absolute;
  top: -5px;
  left: 6px;
  margin: 0;
  padding: 0 1px;
  font: bold 12px "Liberation Sans", Arial, sans-serif;
  letter-spacing: 0.2px;
  line-height: 12px;
  white-space: nowrap;
  background: #ece9d8;
}
.gt.navy { color: #000080; }
.gt.gray { color: #a8a494; }
.gt.bluey { color: #0a50d8; }

.g1 { display: flex; width: 302px; padding-left: 4px; }
.g1-left { width: 210px; flex: none; margin-top: -5px; }
.chans { display: flex; gap: 1px; height: 18px; }
.chan {
  flex: none;
  box-sizing: border-box;
  height: 18px;
  border: 2px solid #0f4a78;
  border-radius: 3px;
  font: bold 13px "Liberation Sans", sans-serif;
}
.chan.gray { background: linear-gradient(#eceae2, #bdbbb4); color: #222; font-weight: normal; }
.chan.dim { color: #8a887c; }
.chan.focus { outline: 1px dotted #444; outline-offset: -3px; color: #777; }
.chan.red { background: linear-gradient(#f44, #e00000 60%, #c80000); }
.chan.blue { background: linear-gradient(#4a82ff, #1a50f0); }
.sensor-row { display: flex; align-items: center; margin-top: 6px; gap: 4px; }
.sensor {
  display: flex;
  align-items: center;
  justify-content: space-between;
  box-sizing: border-box;
  width: 177px;
  height: 21px;
  margin-left: 2px;
  padding: 0 1px 0 3px;
  border: 1px solid #e00000;
  outline: 1px solid #e00000;
  outline-offset: -2px;
  background: #fff;
  font-size: 11px;
  white-space: nowrap;
}
.dots {
  flex: none;
  width: 17px;
  height: 17px;
  line-height: 8px;
  border: 1px solid #8a887c;
  background: linear-gradient(#fbfaf4, #dad6c6);
  font-size: 12px;
  font-weight: bold;
}
.meter { flex: none; }
.ch-tools { display: flex; align-items: center; margin-top: 2px; margin-left: 3px; }
.ct {
  flex: none;
  display: flex;
  align-items: center;
  justify-content: center;
  height: 24px;
  border: 0;
  background: none;
}
.ct.on {
  background: repeating-conic-gradient(#fff 0 25%, #ece9d8 0 50%) 0 0 / 2px 2px;
  box-shadow: inset 1px 1px #aca899;
}
.w25 { width: 25px; }
.w24b { width: 24px; }
.w27 { width: 27px; }
.w20 { width: 20px; }
.ct.fx { font: italic bold 15px "Liberation Serif", serif; }
.ct.fx sub { font-size: 9px; }
.knob { flex: none; overflow: visible; margin-top: 4px; margin-left: -2px; }
.k { font: 10.5px "Liberation Sans", sans-serif; fill: #000; }
.k-val { font: 13px "Liberation Sans", sans-serif; fill: #000; }

.g2 { width: 104px; }
.g2 svg { position: absolute; left: -1px; top: -1px; overflow: visible; }

.g3 { width: 125px; margin-left: 1px; padding: 9px 0 0 7px; }
.sync-row { display: flex; align-items: center; height: 25px; }
.sync-row.low { margin-top: 5px; height: 22px; }
.sy {
  flex: none;
  display: flex;
  align-items: center;
  justify-content: center;
  width: 27px;
  height: 25px;
  margin-right: 1px;
  border: 0;
  background: none;
}
.sy.on { background: repeating-conic-gradient(#fff 0 25%, #ece9d8 0 50%) 0 0 / 2px 2px; margin-left: 2px; }
.dis { width: 47px; height: 22px; margin-left: 1px; margin-right: 9px; padding: 0 6px 0 5px; border: 1px solid #aca899; background: none; font-size: 14px; }

.g4 { width: 174px; padding: 10px 0 0 3px; }
.ctl { display: grid; grid-template-columns: 34px 46px 45px 30px; grid-auto-rows: 27px; gap: 3px; }
.cb {
  display: flex;
  align-items: center;
  justify-content: center;
  box-sizing: border-box;
  border: 1px solid #0f4a78;
  border-radius: 3px;
  background: linear-gradient(#fbfaf4, #ece9d8 50%, #d9d5c2);
}
.cb.off { border-color: #c8c5b4; background: #ece9d8; }
.cb.redframe { border: 1px solid #f00; background: #fff; outline: 0; }
.cb.start { grid-column: span 2; justify-content: flex-start; padding-left: 9px; gap: 19px; font: bold 12.5px "Liberation Sans", sans-serif; }
.cb.num { border-color: #1060a8; background: #f2f0e2; color: #107010; font: bold 13px "Liberation Sans", sans-serif; }

.g5 { width: 68px; margin-left: 1px; padding: 10px 0 0 8px; }
.timer { width: 49px; height: 27px; gap: 5px; padding-right: 3px; margin-bottom: 3px; }

/* status */
.status {
  display: flex;
  height: 20px;
  padding-top: 2px;
  gap: 3px;
  box-sizing: border-box;
  border-top: 1px solid #aca899;
  font-size: 11px;
}
.cell {
  box-sizing: border-box;
  height: 17px;
  padding: 1px 0 0 4px;
  border: 1px solid #c5c2ae;
  border-color: #aca899 #fff #fff #aca899;
  white-space: nowrap;
}
.c1 { width: 189px; }
.c2 { flex: 1; }
.c3 { width: 47px; }

.taskbar { height: 4px; background: #2458d0; position: relative; }
.taskbar i { position: absolute; left: 893px; right: 0; top: 0; bottom: 0; background: #1290e8; }
</style>
